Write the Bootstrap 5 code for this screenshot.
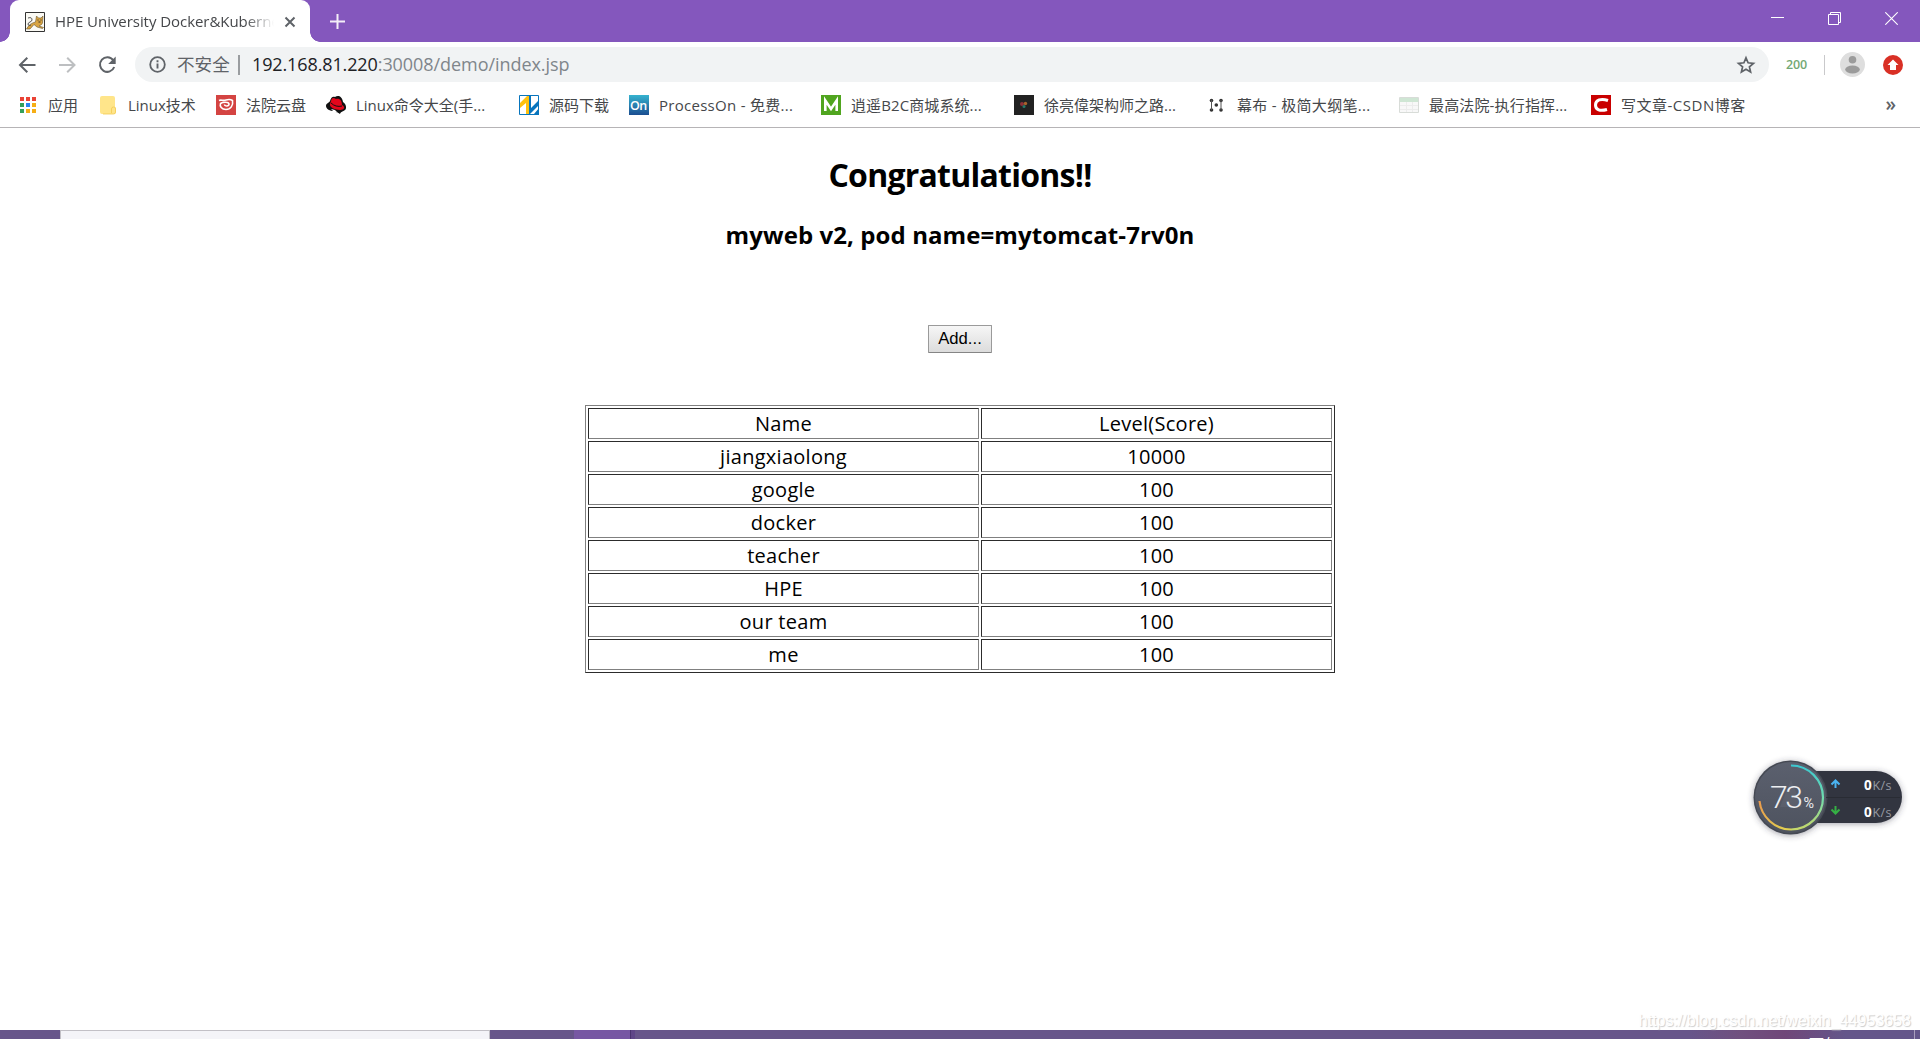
<!DOCTYPE html>
<html lang="zh-CN">
<head>
<meta charset="utf-8">
<title>HPE University Docker&amp;Kubernetes</title>
<link rel="stylesheet" href="https://cdn.jsdelivr.net/npm/bootstrap@5.3.0/dist/css/bootstrap.min.css">
<script src="https://cdn.jsdelivr.net/npm/bootstrap@5.3.0/dist/js/bootstrap.bundle.min.js"></script>
<style>
html, body { height: 100%; }
body { font-family: "Open Sans", "Noto Sans CJK SC", sans-serif; color: #000; background: #fff; overflow: hidden; }
svg { display: block; flex: none; }

/* tab strip */
.tabstrip { height: 42px; background: #8457bd; }
.page-tab { width: 300px; height: 42px; margin-left: 10px; padding: 1px 14px 0 15px; background: #fff; border-radius: 9px 9px 0 0; position: relative; }
.page-tab::before, .page-tab::after { content: ""; position: absolute; bottom: 0; width: 10px; height: 10px; }
.page-tab::before { left: -10px; background: radial-gradient(circle at 0 0, transparent 9.5px, #fff 10px); }
.page-tab::after { right: -10px; background: radial-gradient(circle at 100% 0, transparent 9.5px, #fff 10px); }
.tab-title { width: 219px; margin-left: 10px; margin-right: 10px; font-size: 15px; letter-spacing: -.05px; color: #45474a; white-space: nowrap; overflow: hidden; -webkit-mask-image: linear-gradient(90deg, #000 190px, transparent 219px); }
.new-tab { margin-left: 20px; margin-top: 1px; }
.window-buttons { margin-right: 22px; gap: 44px; padding-bottom: 5px; }

/* toolbar */
.toolbar { height: 45px; padding-left: 18px; padding-right: 17px; }
.nav-forward { margin-left: 23px; }
.nav-reload { margin-left: 21px; }
.omnibox { width: 1634px; height: 35px; margin-left: 18px; padding-left: 14px; padding-right: 13px; border-radius: 18px; background: #f1f3f4; font-size: 18px; color: #80868b; }
.insecure { margin-left: 11px; color: #5f6368; font-size: 17.6px; width: 53px; white-space: nowrap; }
.omni-rule { width: 2px; height: 20px; background: #9a9da0; margin: 0 12px 0 8px; }
.address { letter-spacing: -.06px; line-height: 34px; padding-bottom: 2px; white-space: nowrap; }
.address b { font-weight: 400; color: #202124; letter-spacing: -.12px; }
.counter { width: 22px; margin-left: 17px; font: 600 12.5px/20px "Open Sans", sans-serif; color: #73a873; letter-spacing: -.2px; }
.tool-rule { width: 1px; height: 20px; margin: 0 15px 0 16px; background: #c9c9cb; }

/* bookmarks */
.bookmarks { height: 41px; padding: 0 24px 4px 19px; border-bottom: 1px solid #b6b4b6; font-size: 15px; color: #45474a; }
.bm { display: flex; align-items: center; white-space: nowrap; flex: none; line-height: 22px; }
.bm svg { margin-right: 10px; }
.w-apps { width: 80px; } .w-linux { width: 117px; } .w-court { width: 110px; } .w-cmd { width: 193px; }
.w-src { width: 110px; } .w-on { width: 192px; letter-spacing: .28px; } .w-shop { width: 193px; letter-spacing: .1px; } .w-arch { width: 193px; }
.w-mubu { width: 192px; letter-spacing: .32px; } .w-exec { width: 192px; letter-spacing: .15px; } .w-csdn { letter-spacing: .5px; }
.w-apps svg, .w-linux svg { margin-right: 11px; }
.bm-more { font-size: 19px; font-weight: 600; color: #5f6368; line-height: 20px; padding-bottom: 3px; }

/* page */
.page { height: 902px; }
.page h1 { font-size: 32px; font-weight: 700; line-height: 44px; margin: 25px 0 0; letter-spacing: -.75px; }
.page h2 { font-size: 24px; font-weight: 700; line-height: 34px; margin: 21px 0 0; letter-spacing: .09px; }
.add-btn { width: 64px; height: 28px; margin-top: 73px; padding: 0; border: 1px solid #9a9a9a; border-bottom-color: #858585; border-radius: 1px; background: linear-gradient(#f6f6f6, #dcdcdc); color: #000; font: 16.67px/24px "Liberation Sans", Arial, sans-serif; }
.scores { width: 750px; margin-top: 52px; border: 1px solid; border-color: #808080 #2c2c2c #2c2c2c #808080; border-collapse: separate; border-spacing: 2px; table-layout: fixed; font-size: 20px; line-height: 29px; text-align: center; letter-spacing: .28px; }
.scores td { height: 31px; padding: 0; border: 1px solid; border-color: #2c2c2c #808080 #808080 #2c2c2c; }
.scores td:first-child { width: 391px; }

/* overlays */
.watermark { position: absolute; right: 9px; top: 1010px; font: 16px/22px "Liberation Sans", Arial, sans-serif; color: #fff; text-shadow: 1px 1px 1px #ccc; white-space: nowrap; }
.netmeter { position: absolute; left: 1744px; top: 750px; }

/* taskbar */
.taskbar { height: 9px; background: linear-gradient(90deg, #67558a 0, #67558a 1690px, #70507f 1740px, #704779 1785px, #64568a 1845px, #64568a); overflow: hidden; }
.task-search { width: 430px; margin-left: 60px; background: #f4f4f8; border: 1px solid #c2c0c6; border-bottom: 0; }
.task-active { width: 57px; margin-left: 84px; background: #7757a3; border-right: 1px solid #49336f; }
.task-next { width: 4px; background: #5f4688; }
.clock { width: 100px; margin-right: 5px; color: #fff; font-size: 15px; line-height: 20px; padding-top: 4px; letter-spacing: .6px; white-space: nowrap; }
.desk-edge { width: 6px; border-left: 1px solid #a99fbd; }
</style>
</head>
<body class="d-flex flex-column">
<header>
  <div class="tabstrip d-flex align-items-center">
    <div class="page-tab d-flex align-items-center">
      <svg width="20" height="20" viewBox="0 0 20 20"><path d="M.5.5h19v19H.5z" fill="#fbfaf4" stroke="#333"/><path d="M1.500 17c2-4 5-6 9-7l1-6 2 2h2.500l2-2-.5 7c-1 2.500-2.500 2-3.500 3l4.500 1.500-1 1-5.500-1.500-3-2.500-4 4.500z" fill="#d9a441" stroke="#665431" stroke-width=".6"/><path d="M3 6c3-1 4 0 4 2s-4 2-4 4 2 1.500 3 1" fill="none" stroke="#444" stroke-width=".9"/><path d="M12.500 8h1m2 0h1m-3 2h2" stroke="#222" stroke-width=".9"/></svg>
      <span class="tab-title">HPE University Docker&amp;Kubernetes</span>
      <svg width="12" height="12" viewBox="0 0 12 12"><path d="M1.5 1.5l9 9m0-9l-9 9" stroke="#5f6368" stroke-width="2"/></svg>
    </div>
    <svg class="new-tab" width="15" height="15" viewBox="0 0 15 15"><path d="M7.5 0v15M0 7.5h15" stroke="#f3eef8" stroke-width="2"/></svg>
    <div class="window-buttons ms-auto d-flex align-items-center">
      <svg width="13" height="13" viewBox="0 0 13 13"><path d="M0 5.5h13" stroke="#fff"/></svg>
      <svg width="13" height="13" viewBox="0 0 13 13"><path d="M.5 2.5h10v10H.5zM2.5 2.5v-2h10v10h-2" fill="none" stroke="#fff"/></svg>
      <svg width="13" height="13" viewBox="0 0 13 13"><path d="M.3.3l12.4 12.4m0-12.4L.3 12.7" stroke="#fff" stroke-width="1.1"/></svg>
    </div>
  </div>
  <div class="toolbar d-flex align-items-center">
    <svg width="18" height="18" viewBox="0 0 18 18"><path d="M17.5 9H2.5M9.3 1.7L2 9l7.300 7.300" fill="none" stroke="#5f6368" stroke-width="2"/></svg>
    <svg class="nav-forward" width="18" height="18" viewBox="0 0 18 18"><path d="M0 9h15M8.200 1.700L15.500 9l-7.300 7.300" fill="none" stroke="#bdbfc1" stroke-width="2"/></svg>
    <svg class="nav-reload" width="19" height="18" viewBox="0 0 19 18"><path d="M15.200 4.200A7.300 7.300 0 1 0 16.200 11" fill="none" stroke="#5f6368" stroke-width="2"/><path d="M17.700.5v7.500h-7.500z" fill="#5f6368"/></svg>
    <div class="omnibox d-flex align-items-center">
      <svg width="17" height="17" viewBox="0 0 17 17"><circle cx="8.500" cy="8.500" r="7.300" fill="none" stroke="#5f6368" stroke-width="1.800"/><path d="M8.500 7.500v5M8.500 4.300v2" stroke="#5f6368" stroke-width="1.900"/></svg>
      <span class="insecure">不安全</span><span class="omni-rule"></span>
      <span class="address"><b>192.168.81.220</b>:30008/demo/index.jsp</span>
      <svg class="ms-auto" width="20" height="20" viewBox="0 0 20 20"><path d="M10 2.800l2.100 5 5.400.5-4.100 3.500 1.200 5.300L10 14.300l-4.600 2.800 1.200-5.300-4.100-3.500 5.400-.5z" fill="none" stroke="#5f6368" stroke-width="1.700"/></svg>
    </div>
    <span class="counter">200</span><span class="tool-rule"></span>
    <svg width="25" height="25" viewBox="0 0 25 25"><circle cx="12.500" cy="12.500" r="12.500" fill="#dedede"/><circle cx="12.500" cy="7.700" r="3.800" fill="#9b9b9b"/><ellipse cx="12.500" cy="17.500" rx="7.300" ry="4" fill="#9b9b9b"/></svg>
    <svg class="ms-auto" width="20" height="20" viewBox="0 0 20 20"><circle cx="10" cy="10" r="10" fill="#d93025"/><path d="M10 4.500l5.500 5.500H13v5H7v-5H4.500z" fill="#fff"/></svg>
  </div>
  <nav class="bookmarks d-flex align-items-center">
    <span class="bm w-apps"><svg width="18" height="18" viewBox="0 0 18 18"><path fill="#ea4335" d="M1 1h4v4H1zM7 1h4v4H7zM13 1h4v4h-4z"/><path fill="#34a05a" d="M1 7h4v4H1zM1 13h4v4H1z"/><path fill="#2a84f0" d="M7 7h4v4H7z"/><path fill="#f6ae15" d="M13 7h4v4h-4zM13 13h4v4h-4z"/><path fill="#f6ae15" d="M7 13h4v4H7z"/></svg>应用</span>
    <span class="bm w-linux"><svg width="18" height="20" viewBox="0 0 18 20"><path d="M3 1h11q2 0 2 2v9l1 1v4q0 2-2 2H3q-2 0-2-2V3q0-2 2-2z" fill="#ffe58a"/><path d="M12.500 18v-4q0-2 2-2h1q1 1 1 2v3q0 2-2 2H4" fill="#ffe58a" stroke="#f2ca52" stroke-width=".8"/></svg>Linux技术</span>
    <span class="bm w-court"><svg width="20" height="20" viewBox="0 0 20 20"><path fill="#d44442" d="M0 0h20v20H0z"/><path d="M3 5.500c2-1 4 .5 7-.5s5-.5 6.500.5c1 5-2 9-6.500 9s-6.500-3.500-5.500-6c2-1.500 8-2 8.500.5s-4.500 2.500-4.500.5" fill="none" stroke="#fff" stroke-width="1.600"/></svg>法院云盘</span>
    <span class="bm w-cmd"><svg width="20" height="20" viewBox="0 0 20 20"><path d="M0 11C0 8 3 8 4 6c1-4 3-5 5-4 3-2 7-1 8 5 3 2 4 6 2 8-2 2-4 1-5 4-2-2-4-1-6-3-4 0-8-2-8-5z" fill="#111"/><path d="M5 6c1-4 3-3 5-2 4-1 6 2 6 6 4 2 2 5-2 5-5 0-11-3-10-6z" fill="#e3061b"/><path d="M5 8c3 3 7 4 11 3" fill="none" stroke="#111"/><path d="M5 14l4 1 3 3-4-1z" fill="#fff"/></svg>Linux命令大全(手...</span>
    <span class="bm w-src"><svg width="20" height="20" viewBox="0 0 20 20"><path d="M.5.500h19v19H.5z" fill="#fff" stroke="#0875bd"/><path d="M1 8l7-7h2v18H7V8l-6 5z" fill="#ffc20e"/><path d="M10 0h2v13l7-7v5l-8 8h-1zM15 19l5-6v7h-5z" fill="#0875bd"/></svg>源码下载</span>
    <span class="bm w-on"><svg width="20" height="20" viewBox="0 0 20 20"><defs><linearGradient id="onfill" x2="0" y2="1"><stop stop-color="#36b3cf"/><stop offset="1" stop-color="#1b4e91"/></linearGradient></defs><path fill="url(#onfill)" d="M0 0h20v20H0z"/><text x="1" y="14.500" font-size="12.500" font-weight="600" fill="#fff" textLength="17.500">On</text></svg>ProcessOn - 免费...</span>
    <span class="bm w-shop"><svg width="20" height="20" viewBox="0 0 20 20"><path fill="#50a51f" d="M0 0h20v20H0z"/><path d="M4.300 16V5.500L10 14l5.700-8.500V16" fill="none" stroke="#fff" stroke-width="2.600"/></svg>逍遥B2C商城系统...</span>
    <span class="bm w-arch"><svg width="20" height="20" viewBox="0 0 20 20"><path fill="#222" d="M0 0h20v20H0z"/><circle cx="8" cy="9" r="2" fill="#8d3038"/><circle cx="11.500" cy="8.500" r="1.700" fill="#a8632b"/><circle cx="10" cy="11.500" r="1.500" fill="#287b6b"/></svg>徐亮偉架构师之路...</span>
    <span class="bm w-mubu"><svg width="20" height="20" viewBox="0 0 20 20"><g fill="#333"><circle cx="4.500" cy="5.500" r="1.800"/><circle cx="14" cy="5.500" r="1.800"/><circle cx="4.500" cy="15" r="1.800"/><circle cx="14" cy="15" r="1.800"/><circle cx="9.300" cy="10" r="1.800"/></g><path d="M4.500 5v10M14 5v10" stroke="#555"/></svg>幕布 - 极简大纲笔...</span>
    <span class="bm w-exec"><svg width="20" height="20" viewBox="0 0 20 20"><path d="M.5 2.500h19v15H.5z" fill="#f8f8f8" stroke="#d8dcd8"/><path d="M1 3h18v4H1z" fill="#cfe6d4"/><path d="M1 10.500h18M1 14.500h18M7.500 7v10M13.500 7v10" stroke="#ececec"/></svg>最高法院-执行指挥...</span>
    <span class="bm w-csdn"><svg width="20" height="20" viewBox="0 0 20 20"><path fill="#c90000" d="M0 0h20v20H0z"/><path d="M17 5.500C10 3 4.500 5 4.500 10s4.500 6.500 11.500 4.500" fill="none" stroke="#fff" stroke-width="3"/></svg>写文章-CSDN博客</span>
    <span class="bm-more ms-auto">»</span>
  </nav>
</header>
<main class="page d-flex flex-column align-items-center">
  <h1>Congratulations!!</h1>
  <h2>myweb v2, pod name=mytomcat-7rv0n</h2>
  <button class="add-btn" type="button">Add...</button>
  <table class="scores">
    <tr><td>Name</td><td>Level(Score)</td></tr>
    <tr><td>jiangxiaolong</td><td>10000</td></tr>
    <tr><td>google</td><td>100</td></tr>
    <tr><td>docker</td><td>100</td></tr>
    <tr><td>teacher</td><td>100</td></tr>
    <tr><td>HPE</td><td>100</td></tr>
    <tr><td>our team</td><td>100</td></tr>
    <tr><td>me</td><td>100</td></tr>
  </table>
</main>
<footer class="taskbar d-flex">
  <div class="task-search"></div><div class="task-active"></div><div class="task-next"></div>
  <div class="clock ms-auto">下午 11:15:14</div><div class="desk-edge"></div>
</footer>
<div class="watermark">https://blog.csdn.net/weixin_44953658</div>
<svg class="netmeter" width="170" height="96" viewBox="0 0 170 96" font-family="Open Sans, sans-serif">
  <defs>
    <filter id="glow" x="-20%" y="-20%" width="140%" height="140%"><feDropShadow dx="0" dy="1" stdDeviation="3" flood-color="#334" flood-opacity=".45"/></filter>
    <linearGradient id="disc" x2="0" y2="1"><stop stop-color="#5b606e"/><stop offset="1" stop-color="#4e535f"/></linearGradient>
    <linearGradient id="arcr" x2="0" y2="1"><stop stop-color="#3cc8d0"/><stop offset=".5" stop-color="#6fdcae"/><stop offset="1" stop-color="#c6d86a"/></linearGradient>
    <linearGradient id="arcl" x2="1" y2="1"><stop stop-color="#eb9a4c"/><stop offset="1" stop-color="#e1d451"/></linearGradient>
  </defs>
  <g filter="url(#glow)"><path d="M40 21h92a26 26 0 0 1 0 52H40z" fill="#333640"/><circle cx="46.500" cy="47.500" r="37" fill="#444853"/></g>
  <path d="M82 47.500h74" stroke="#292c34"/>
  <circle cx="46.500" cy="47.500" r="35.500" fill="url(#disc)"/>
  <path d="M47 30l11 27H36z" fill="#686c78" opacity=".4"/>
  <path d="M47 15.500A32 32 0 0 1 47 79.500" fill="none" stroke="url(#arcr)" stroke-width="2.200"/>
  <path d="M47 79.500A32 32 0 0 1 15.500 51" fill="none" stroke="url(#arcl)" stroke-width="2.200"/>
  <text x="26" y="57.500" font-family="Roboto, sans-serif" font-weight="300" font-size="32" fill="#eceef1" textLength="33">73</text>
  <text x="59.500" y="57.500" font-family="Roboto, sans-serif" font-size="14" fill="#eceef1" textLength="10.500" lengthAdjust="spacingAndGlyphs">%</text>
  <path d="M91.500 38v-6m-4 2.500l4-4 4 4" fill="none" stroke="#4ab4f2" stroke-width="2"/>
  <path d="M91.500 56v6m-4-2.500l4 4 4-4" fill="none" stroke="#35b044" stroke-width="2"/>
  <g font-size="13.500"><text x="120" y="40" font-weight="700" fill="#fff">0</text><text x="128.500" y="40" font-size="12.500" fill="#9699a2" textLength="19">K/s</text><text x="120" y="66.500" font-weight="700" fill="#fff">0</text><text x="128.500" y="66.500" font-size="12.500" fill="#9699a2" textLength="19">K/s</text></g>
</svg>
</body>
</html>
